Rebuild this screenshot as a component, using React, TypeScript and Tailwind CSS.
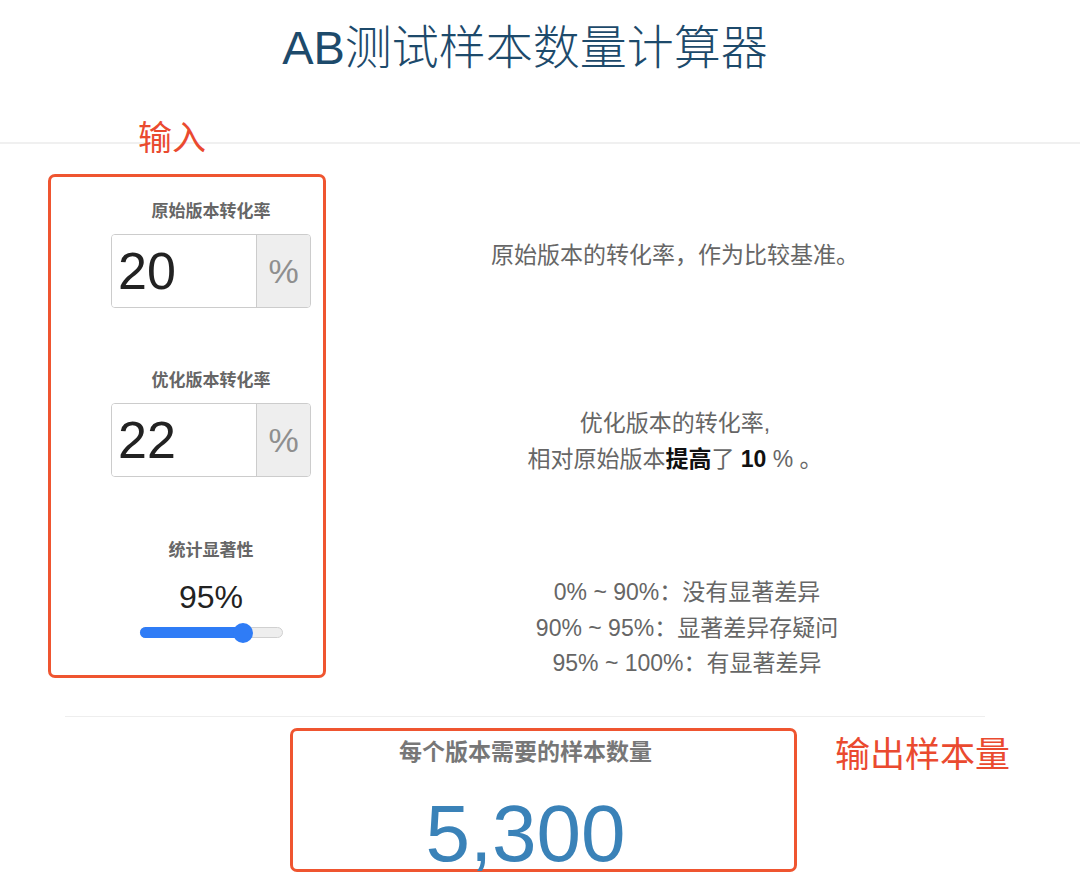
import React from "react";

const legend = [
  "0% ~ 90%：没有显著差异",
  "90% ~ 95%：显著差异存疑问",
  "95% ~ 100%：有显著差异",
];

function RateInput({ label, value, first }: { label: string; value: string; first?: boolean }) {
  return (
    <div className={first ? "" : "mt-[61px]"}>
      <p className="text-center text-[17px] leading-[24px] font-bold text-[#666]">{label}</p>
      <div className="mt-[10px] flex h-[74px] rounded-[4px] border border-[#ccc] overflow-hidden">
        <div className="flex-1 flex items-center pl-[6px] text-[52px] text-[#222] bg-white">{value}</div>
        <div className="w-[54px] flex items-center justify-center border-l border-[#ccc] bg-[#eee] text-[34px] text-[#8f8f8f]">
          %
        </div>
      </div>
    </div>
  );
}

export default function App() {
  return (
    <div className="relative w-[1080px] h-[896px] bg-white overflow-hidden font-['Liberation_Sans','Noto_Sans_CJK_SC',sans-serif]">
      {/* Title */}
      <header className="h-[142px] pt-[16px] pr-[30px] text-center">
        <h1 className="text-[47px] leading-[64px] font-light text-[#1d4a6b]">
          <span className="font-normal">AB</span>测试样本数量计算器
        </h1>
      </header>
      <div className="h-[2px] bg-[#f0f0f0]" />

      {/* annotation */}
      <span className="absolute left-[138px] top-[114px] text-[34px] leading-[48px] text-[#ea4a2f]">输入</span>

      {/* Inputs */}
      <div className="flex pl-[48px] pt-[30px] h-[534px]">
        <div className="w-[278px] h-[504px] border-[3px] border-[#ef5530] rounded-[7px] pl-[60px] pr-[12px] pt-[23px]">
          <RateInput label="原始版本转化率" value="20" first />
          <RateInput label="优化版本转化率" value="22" />

          <div className="mt-[62px]">
            <p className="text-center text-[17px] leading-[24px] font-bold text-[#666]">统计显著性</p>
            <p className="mt-[14px] text-center text-[32px] leading-[40px] text-[#222]">95%</p>
            <div className="relative mx-auto mt-[10px] w-[143px] h-[11px] rounded-full bg-[#eee] border border-[#d0d0d0]">
              <div className="absolute -left-px -top-px h-[11px] w-[104px] rounded-full bg-[#2f7cf6]" />
              <div className="absolute left-[92px] top-1/2 -translate-y-1/2 w-[20px] h-[20px] rounded-full bg-[#2f7cf6]" />
            </div>
          </div>
        </div>

        <div className="w-[698px] pt-[63px] text-center text-[23px] text-[#666]">
          <p className="leading-[36px]">原始版本的转化率，作为比较基准。</p>
          <div className="mt-[132px] leading-[36px]">
            <p>优化版本的转化率,</p>
            <p>
              相对原始版本<b className="text-[#111]">提高</b>了 <b className="text-[#111]">10</b> % 。
            </p>
          </div>
          <div className="mt-[98px] pl-[24px] leading-[35.5px]">
            {legend.map((l) => (
              <p key={l}>{l}</p>
            ))}
          </div>
        </div>
      </div>

      <div className="mt-[38px] ml-[65px] w-[920px] h-px bg-[#eee]" />

      {/* Output */}
      <div className="mt-[11px] flex items-start pl-[290px]">
        <div className="w-[507px] h-[144px] border-[3px] border-[#ef5530] rounded-[7px] pr-[36px] text-center">
          <p className="pt-[5px] text-[23px] leading-[32px] font-bold text-[#777]">每个版本需要的样本数量</p>
          <p className="mt-[26px] text-[80px] leading-[80px] text-[#3a82b8]">5,300</p>
        </div>
        <span className="ml-[38px] mt-[3px] text-[35px] leading-[48px] text-[#ea4a2f]">输出样本量</span>
      </div>
    </div>
  );
}
